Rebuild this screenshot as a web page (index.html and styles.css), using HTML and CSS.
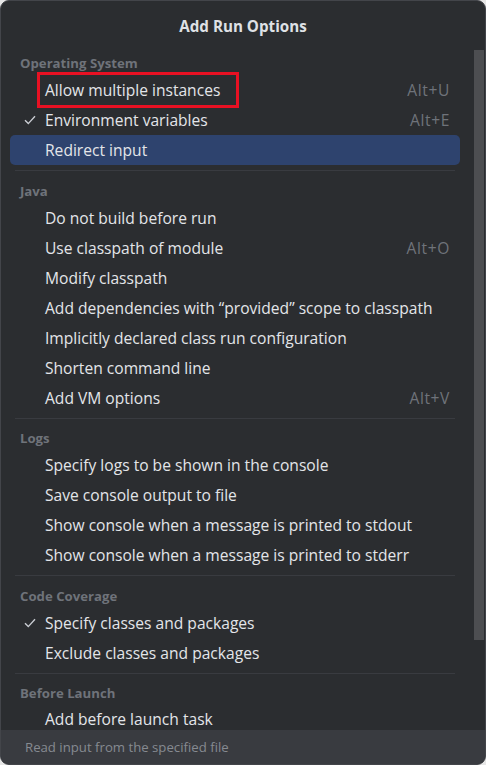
FILE: index.html
```html
<!DOCTYPE html>
<html>
<head>
<meta charset="utf-8">
<link rel="stylesheet" href="styles.css">
</head>
<body>
<div class="dialog">
  <div class="title">Add Run Options</div>
  <div class="body">
    <div class="list">
      <div class="header">Operating System</div>
      <div class="item marked"><span class="check"></span><span class="label">Allow multiple instances</span><span class="key">Alt+U</span></div>
      <div class="item"><span class="check"><svg width="12" height="10" viewBox="0 0 12 10"><path d="M1 5.2 L4.3 8.6 L11 1.2" fill="none" stroke="#c9ccd2" stroke-width="1.4"/></svg></span><span class="label">Environment variables</span><span class="key">Alt+E</span></div>
      <div class="item selected"><span class="check"></span><span class="label">Redirect input</span></div>
      <div class="sep"></div>
      <div class="header">Java</div>
      <div class="item"><span class="check"></span><span class="label">Do not build before run</span></div>
      <div class="item"><span class="check"></span><span class="label">Use classpath of module</span><span class="key">Alt+O</span></div>
      <div class="item"><span class="check"></span><span class="label">Modify classpath</span></div>
      <div class="item"><span class="check"></span><span class="label">Add dependencies with “provided” scope to classpath</span></div>
      <div class="item"><span class="check"></span><span class="label">Implicitly declared class run configuration</span></div>
      <div class="item"><span class="check"></span><span class="label">Shorten command line</span></div>
      <div class="item"><span class="check"></span><span class="label">Add VM options</span><span class="key">Alt+V</span></div>
      <div class="sep"></div>
      <div class="header">Logs</div>
      <div class="item"><span class="check"></span><span class="label">Specify logs to be shown in the console</span></div>
      <div class="item"><span class="check"></span><span class="label">Save console output to file</span></div>
      <div class="item"><span class="check"></span><span class="label">Show console when a message is printed to stdout</span></div>
      <div class="item"><span class="check"></span><span class="label">Show console when a message is printed to stderr</span></div>
      <div class="sep"></div>
      <div class="header">Code Coverage</div>
      <div class="item"><span class="check"><svg width="12" height="10" viewBox="0 0 12 10"><path d="M1 5.2 L4.3 8.6 L11 1.2" fill="none" stroke="#c9ccd2" stroke-width="1.4"/></svg></span><span class="label">Specify classes and packages</span></div>
      <div class="item"><span class="check"></span><span class="label">Exclude classes and packages</span></div>
      <div class="sep"></div>
      <div class="header">Before Launch</div>
      <div class="item last"><span class="check"></span><span class="label">Add before launch task</span></div>
    </div>
    <div class="scrollbar"><div class="thumb"></div></div>
  </div>
  <div class="footer">Read input from the specified file</div>
</div>
</body>
</html>
```

FILE: styles.css
```css
html, body {
  margin: 0;
  padding: 0;
  background: #e6e6e6;
}
body {
  width: 486px;
  height: 765px;
  overflow: hidden;
  font-family: "Open Sans", "Noto Sans", "Liberation Sans", sans-serif;
}
.dialog {
  box-sizing: border-box;
  width: 486px;
  height: 765px;
  background: #2b2d30;
  border: 1px solid #43454a;
  border-radius: 9px;
  overflow: hidden;
  display: flex;
  flex-direction: column;
}
.title {
  flex: none;
  height: 49px;
  display: flex;
  align-items: center;
  justify-content: center;
  color: #dfe1e5;
  font-weight: 700;
  font-size: 15.2px;
}
.body {
  flex: 1;
  min-height: 0;
  display: flex;
  overflow: hidden;
}
.list {
  flex: 1;
  padding-left: 9px;
  padding-right: 14px;
}
.header {
  height: 25px;
  line-height: 26px;
  padding-left: 10px;
  color: #6f737a;
  font-size: 13.2px;
  font-weight: 700;
}
.item {
  position: relative;
  height: 30px;
  display: flex;
  align-items: center;
  border-radius: 5px;
  color: #e3e5e9;
  font-size: 15.6px;
}
.item.last {
  height: 28px;
}
.item.selected {
  background: #2e436e;
}
.check {
  width: 35px;
  flex: none;
  display: flex;
  justify-content: flex-start;
  padding-left: 14px;
  box-sizing: border-box;
}
.label {
  flex: 1;
  white-space: nowrap;
}
.key {
  color: #6f737a;
  padding-right: 10px;
  letter-spacing: 0.6px;
}
.marked::after {
  content: "";
  position: absolute;
  left: 27px;
  top: -3px;
  width: 196px;
  height: 30px;
  border: 3px solid #e81123;
}
.sep {
  height: 12.5px;
  display: flex;
  align-items: flex-start;
}
.sep::before {
  content: "";
  display: block;
  margin: 5px 5px 0 5px;
  height: 1px;
  flex: 1;
  background: #393b40;
}
.scrollbar {
  flex: none;
  width: 10px;
  margin-right: 1px;
}
.thumb {
  height: 590px;
  background: #4d4e51;
}
.footer {
  flex: none;
  height: 34px;
  line-height: 35px;
  background: #393b40;
  color: #868a91;
  font-size: 13.2px;
  padding-left: 24px;
}
```
